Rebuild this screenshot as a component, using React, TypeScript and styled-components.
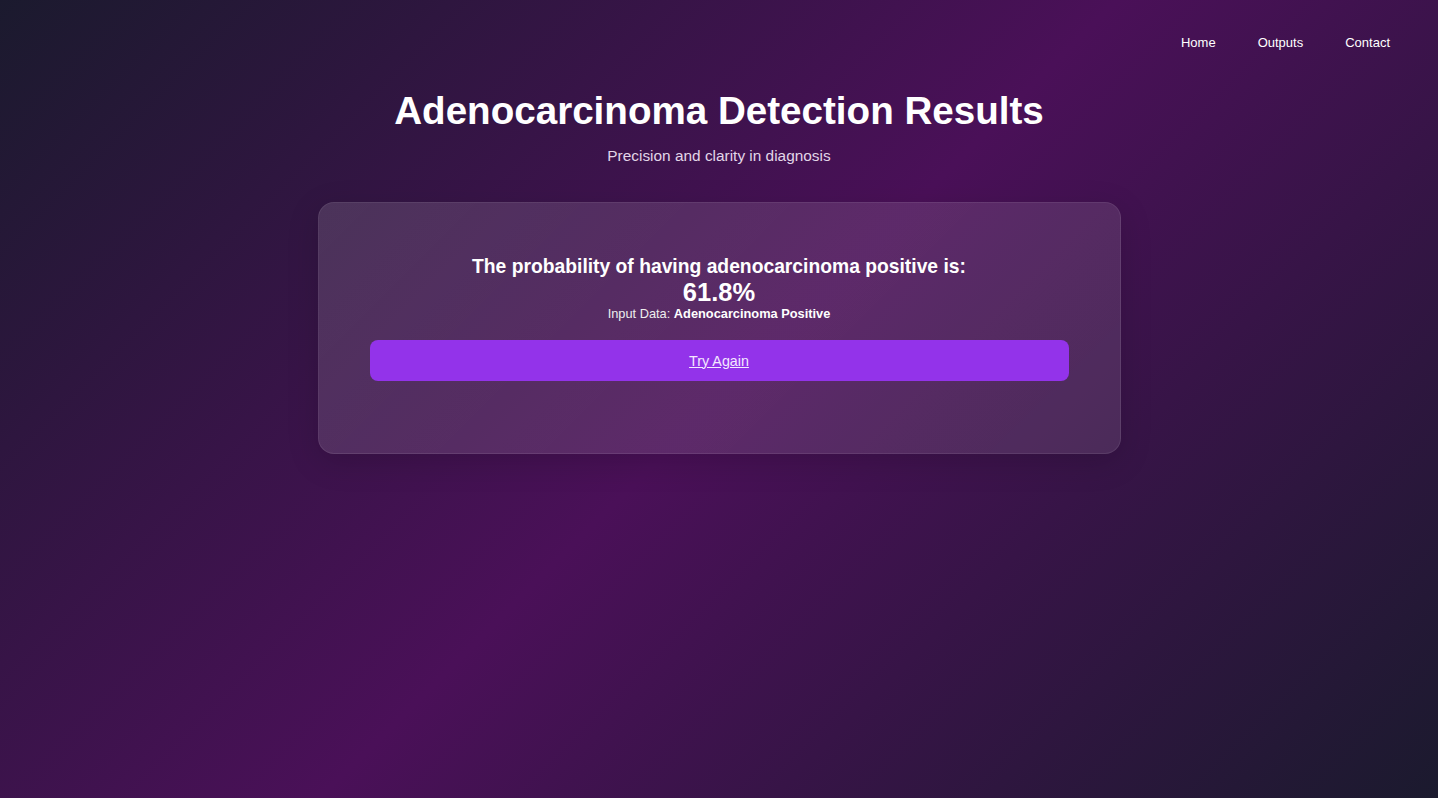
import React from "react";
import styled, { createGlobalStyle } from "styled-components";

const Global = createGlobalStyle`
  html, body { margin: 0; padding: 0; }
  body {
    font-family: "Liberation Sans", Arial, sans-serif;
    color: #fff;
  }
`;

const Page = styled.div`
  min-height: 798px;
  background: linear-gradient(135deg, #1b1a2e 0%, #4a1058 50%, #1b1a2e 100%);
  display: flex;
  flex-direction: column;
`;

const Nav = styled.nav`
  display: flex;
  justify-content: flex-end;
  gap: 42px;
  padding: 35px 48px 0 0;
`;

const NavLink = styled.a`
  color: #fff;
  font-size: 13px;
  text-decoration: none;
  line-height: 16px;
`;

const Header = styled.header`
  text-align: center;
  padding-top: 37px;
`;

const Title = styled.h1`
  margin: 0;
  font-size: 38.6px;
  font-weight: 700;
  line-height: 46px;
`;

const Subtitle = styled.p`
  margin: 13px 0 0;
  font-size: 15.4px;
  color: #e2d6e8;
  line-height: 18px;
`;

const Card = styled.section`
  width: 803px;
  box-sizing: border-box;
  margin: 37px auto 0;
  padding: 52px 51px 72px;
  border-radius: 16px;
  background: linear-gradient(135deg, rgba(255,255,255,0.13), rgba(255,255,255,0.11) 50%, rgba(255,255,255,0.1));
  border: 1px solid rgba(255,255,255,0.08);
  box-shadow: 0 8px 32px rgba(0,0,0,0.15);
  text-align: center;
`;

const Question = styled.h2`
  margin: 0;
  font-size: 19.3px;
  font-weight: 700;
  line-height: 23px;
`;

const Value = styled.div`
  font-size: 25.5px;
  font-weight: 700;
  line-height: 28px;
`;

const InputLine = styled.p`
  margin: 0;
  font-size: 12.8px;
  line-height: 15px;
  color: #eee;
  strong { color: #fff; }
`;

const Button = styled.a`
  display: flex;
  align-items: center;
  justify-content: center;
  margin-top: 19px;
  height: 41px;
  border-radius: 8px;
  background: #9333ea;
  color: #f3e8ff;
  font-size: 14.3px;
  text-decoration: underline;
`;

export default function App() {
  return (
    <>
      <Global />
      <Page>
        <Nav>
          <NavLink href="#">Home</NavLink>
          <NavLink href="#">Outputs</NavLink>
          <NavLink href="#">Contact</NavLink>
        </Nav>
        <Header>
          <Title>Adenocarcinoma Detection Results</Title>
          <Subtitle>Precision and clarity in diagnosis</Subtitle>
        </Header>
        <Card>
          <Question>The probability of having adenocarcinoma positive is:</Question>
          <Value>61.8%</Value>
          <InputLine>
            Input Data: <strong>Adenocarcinoma Positive</strong>
          </InputLine>
          <Button href="#">Try Again</Button>
        </Card>
      </Page>
    </>
  );
}
